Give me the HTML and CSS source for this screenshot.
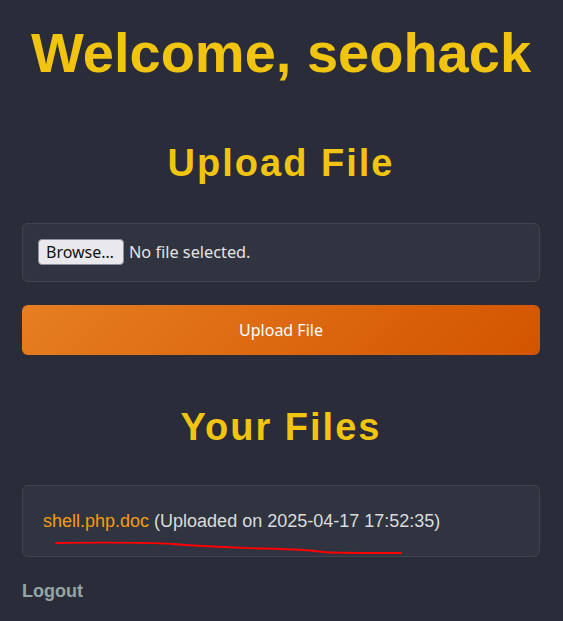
FILE: index.html
```html
<!DOCTYPE html>
<html lang="en">
<head>
<meta charset="utf-8">
<title>Dashboard</title>
<link rel="stylesheet" href="styles.css">
</head>
<body>
<main class="page">
  <h1 class="title">Welcome, seohack</h1>

  <h2 class="section-title upload-title">Upload File</h2>
  <form class="upload-form">
    <div class="file-box">
      <span class="browse-btn">Browse…</span>
      <span class="file-status">No file selected.</span>
    </div>
    <button type="button" class="upload-btn">Upload File</button>
  </form>

  <h2 class="section-title files-title">Your Files</h2>
  <ul class="file-list">
    <li class="file-item">
      <a class="file-link" href="#">shell.php.doc</a> (Uploaded on 2025-04-17 17:52:35)
    </li>
    <svg class="scribble" viewBox="0 0 518 72" width="518" height="72" aria-hidden="true">
      <path d="M33 57 C80 56.5 130 56.8 150 58 C175 60 200 61.5 240 62.5 C270 63.3 290 64 300 66 C310 67.2 330 67 378 67" fill="none" stroke="#ff0000" stroke-width="1.8" stroke-linecap="round"/>
    </svg>
  </ul>

  <a class="logout" href="#">Logout</a>
</main>
</body>
</html>
```

FILE: styles.css
```css
html, body {
  margin: 0;
  padding: 0;
  background: #2a2d39;
}

body {
  font-family: "Liberation Sans", Arial, sans-serif;
  color: #d8d8d8;
}

.page {
  padding: 19px 23px 0 22px;
  display: flex;
  flex-direction: column;
}

.title {
  margin: 0;
  font-size: 56px;
  line-height: 1.2;
  font-weight: 700;
  color: #f1c40f;
  text-align: center;
}

.section-title {
  margin: 0;
  font-size: 38px;
  line-height: 1.2;
  font-weight: 700;
  letter-spacing: 2px;
  color: #f1c40f;
  text-align: center;
}

.upload-title {
  margin-top: 55px;
}

.files-title {
  margin-top: 50px;
}

.upload-form {
  margin: 36px 0 0;
  display: flex;
  flex-direction: column;
  gap: 23px;
}

.file-box {
  display: flex;
  align-items: center;
  gap: 5px;
  padding: 15px;
  height: 27px;
  background: #303440;
  border: 1px solid #41444e;
  border-radius: 6px;
  font-family: "Noto Sans", sans-serif;
  font-size: 16px;
}

.browse-btn {
  box-sizing: border-box;
  height: 26px;
  padding: 0 9px 0 7px;
  display: flex;
  align-items: center;
  background: #e9e9ed;
  color: #111111;
  border: 1px solid #8f8f9d;
  border-radius: 4px;
}

.file-status {
  color: #e4e4e4;
  font-size: 16.3px;
}

.upload-btn {
  height: 50px;
  border: none;
  border-radius: 6px;
  background: linear-gradient(135deg, #e67e22, #d35400);
  color: #ffffff;
  font-family: "Noto Sans", sans-serif;
  font-size: 16px;
  cursor: pointer;
}

.file-list {
  position: relative;
  list-style: none;
  margin: 35px 0 0;
  padding: 20px;
  background: #303440;
  border: 1px solid #41444e;
  border-radius: 6px;
}

.file-item {
  font-size: 18px;
  line-height: 30px;
  color: #dcdcdc;
}

.file-link {
  color: #f39c12;
  text-decoration: none;
}

.scribble {
  position: absolute;
  left: 0;
  top: 0;
  pointer-events: none;
}

.logout {
  align-self: flex-start;
  margin-top: 24px;
  font-size: 18px;
  line-height: 1.2;
  font-weight: 700;
  color: #95a5a6;
  text-decoration: none;
}
```
